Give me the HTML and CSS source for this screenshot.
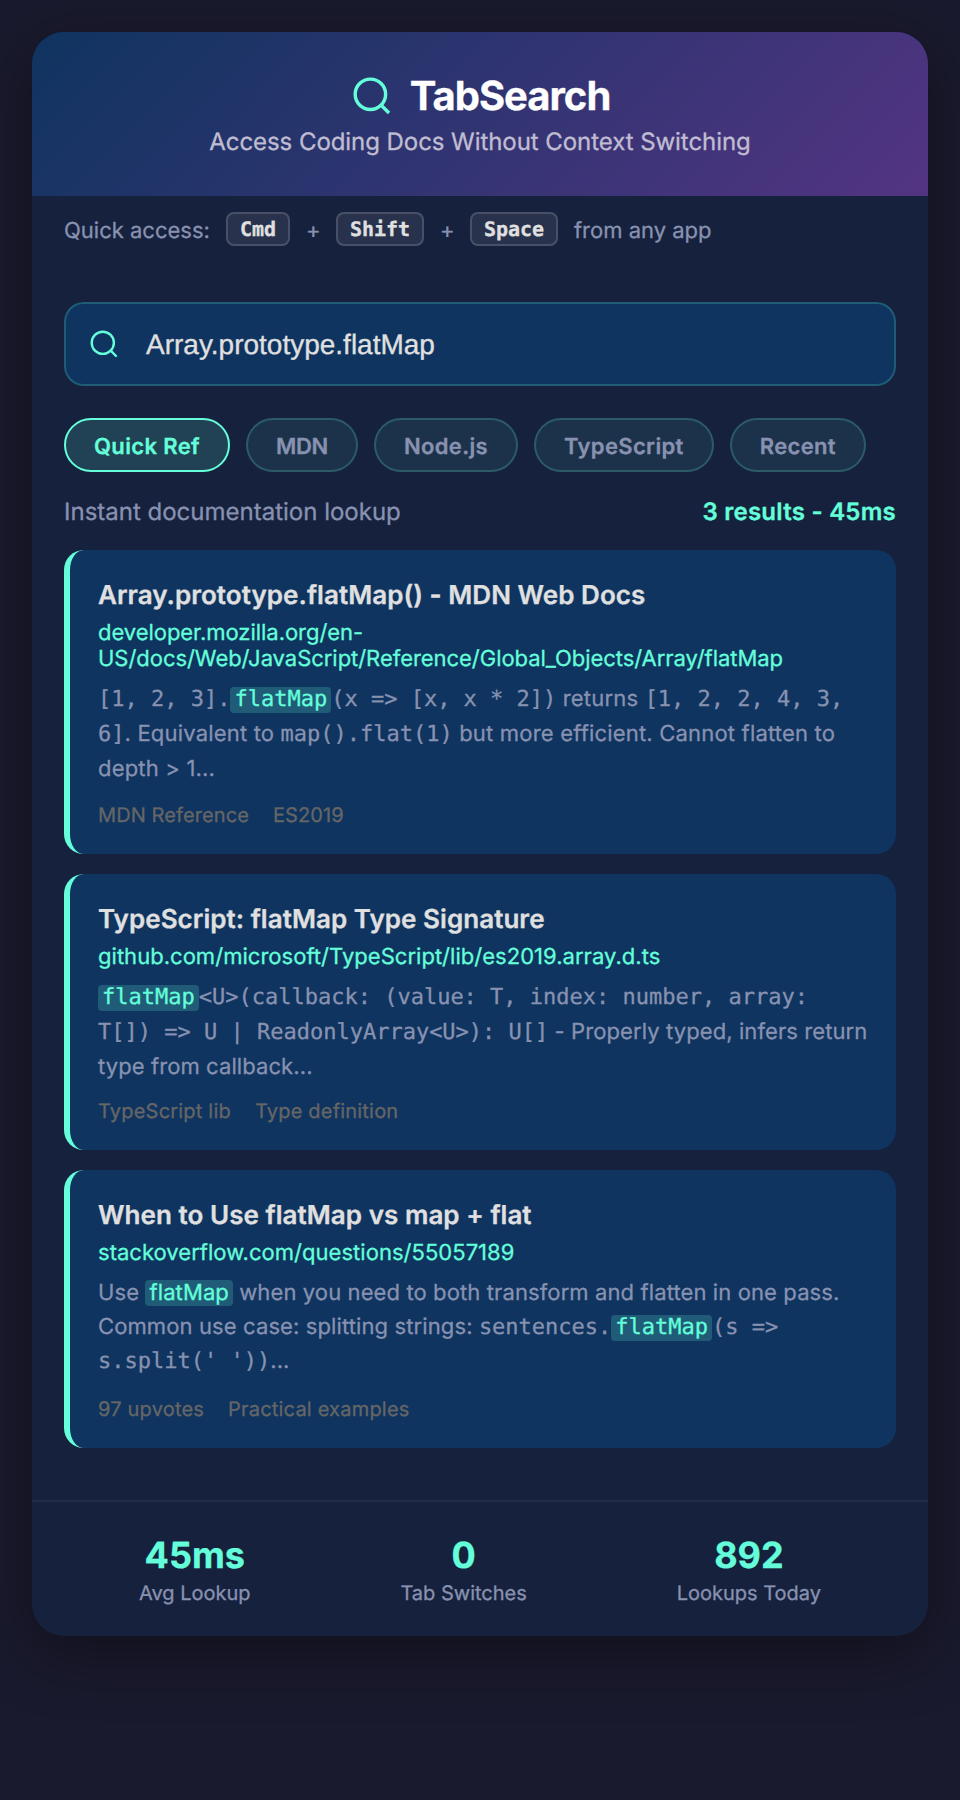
FILE: index.html
```html
<!DOCTYPE html>
<html lang="en">
<head>
<meta charset="utf-8">
<title>TabSearch</title>
<link rel="stylesheet" href="styles.css">
</head>
<body>
<main class="panel">
  <header class="header">
    <h1 class="brand">
      <svg class="brand-icon" viewBox="0 0 40 40"><circle cx="18.4" cy="18.3" r="15.2"/><path d="M29 29L37 37"/></svg>
      <span>TabSearch</span>
    </h1>
    <p class="tagline">Access Coding Docs Without Context Switching</p>
  </header>
  <div class="shortcut">
    <span>Quick access:</span>
    <kbd class="key">Cmd</kbd>
    <span class="plus">+</span>
    <kbd class="key">Shift</kbd>
    <span class="plus">+</span>
    <kbd class="key">Space</kbd>
    <span>from any app</span>
  </div>
  <section class="content">
    <div class="search">
      <svg class="search-icon" viewBox="0 0 28 28"><circle cx="12.8" cy="12.8" r="11.1"/><path d="M20.7 20.7L26 26"/></svg>
      <span class="search-text">Array.prototype.flatMap</span>
    </div>
    <nav class="tabs">
      <span class="tab tab-active">Quick Ref</span>
      <span class="tab tab-caps">MDN</span>
      <span class="tab">Node.js</span>
      <span class="tab">TypeScript</span>
      <span class="tab">Recent</span>
    </nav>
    <div class="info"><span>Instant documentation lookup</span><span class="count">3 results - 45ms</span></div>
    <div class="results">
      <article class="card card-tall">
        <h2 class="card-title">Array.prototype.flatMap() - MDN Web Docs</h2>
        <div class="card-url">developer.mozilla.org/en-US/docs/Web/JavaScript/Reference/Global_Objects/Array/flatMap</div>
        <p class="snippet"><code>[1, 2, 3].<mark>flatMap</mark>(x =&gt; [x, x * 2])</code> returns <code>[1, 2, 2, 4, 3, 6]</code>. Equivalent to <code>map().flat(1)</code> but more efficient. Cannot flatten to depth &gt; 1...</p>
        <div class="meta"><span>MDN Reference</span><span>ES2019</span></div>
      </article>
      <article class="card card-types">
        <h2 class="card-title">TypeScript: flatMap Type Signature</h2>
        <div class="card-url">github.com/microsoft/TypeScript/lib/es2019.array.d.ts</div>
        <p class="snippet"><code><mark>flatMap</mark>&lt;U&gt;(callback: (value: T, index: number, array: T[]) =&gt; U | ReadonlyArray&lt;U&gt;): U[]</code> - Properly typed, infers return type from callback...</p>
        <div class="meta"><span>TypeScript lib</span><span>Type definition</span></div>
      </article>
      <article class="card card-prose">
        <h2 class="card-title">When to Use flatMap vs map + flat</h2>
        <div class="card-url">stackoverflow.com/questions/55057189</div>
        <p class="snippet">Use <mark>flatMap</mark> when you need to both transform and flatten in one pass. Common use case: splitting strings: <code>sentences.<mark>flatMap</mark>(s =&gt; s.split(' '))</code>...</p>
        <div class="meta"><span>97 upvotes</span><span>Practical examples</span></div>
      </article>
    </div>
  </section>
  <footer class="stats">
    <div class="stat"><div class="stat-value">45ms</div><div class="stat-label">Avg Lookup</div></div>
    <div class="stat"><div class="stat-value">0</div><div class="stat-label">Tab Switches</div></div>
    <div class="stat"><div class="stat-value">892</div><div class="stat-label">Lookups Today</div></div>
  </footer>
</main>
</body>
</html>
```
FILE: styles.css
```css
* { box-sizing: border-box; margin: 0; padding: 0; }
body {
  min-height: 1800px;
  padding: 32px;
  background: #1a1a2e;
  color: #e0e0e0;
  font-family: Inter, "Liberation Sans", sans-serif;
  text-rendering: geometricPrecision;
  -webkit-text-stroke: 0.3px currentColor;
}
.panel {
  width: 896px;
  height: 1604px;
  overflow: hidden;
  border-radius: 32px;
  background: #16213e;
  box-shadow: 0 16px 64px rgba(0, 0, 0, 0.4);
}
.header {
  height: 164px;
  padding-top: 40px;
  background: linear-gradient(135deg, #0f3460 0%, #533483 100%);
  text-align: center;
}
.brand {
  display: flex;
  align-items: center;
  justify-content: center;
  gap: 18px;
  padding-left: 2px;
  color: #fff;
  font-size: 40px;
  font-weight: 700;
  line-height: 48px;
  letter-spacing: -1px;
}
.brand-icon, .search-icon { flex: none; fill: none; stroke: #64ffda; }
.brand-icon { width: 40px; height: 40px; stroke-width: 3.4; }
.search-icon { width: 28px; height: 28px; stroke-width: 2.4; stroke-linecap: round; }
.tagline {
  margin-top: 7px;
  color: #c0bdd2;
  font-size: 24px;
  line-height: 29px;
  letter-spacing: -0.06px;
}
.shortcut {
  display: flex;
  align-items: center;
  gap: 16px;
  height: 68px;
  padding: 0 32px;
  color: #8892b0;
  font-size: 22px;
  line-height: 28px;
}
.shortcut > span { padding-top: 1px; }
.shortcut .plus { width: 14px; }
.key {
  height: 34px;
  margin-bottom: 2px;
  padding: 0 12px;
  border: 2px solid rgba(255, 255, 255, 0.15);
  border-radius: 8px;
  background: rgba(255, 255, 255, 0.08);
  color: #e0e0e0;
  font: 700 20px/30px "DejaVu Sans Mono", monospace;
  letter-spacing: -0.04px;
}
.content { padding: 38px 32px 52px; }
.search {
  display: flex;
  align-items: center;
  gap: 28px;
  height: 84px;
  padding: 0 24px;
  border: 2px solid rgba(100, 255, 218, 0.2);
  border-radius: 20px;
  background: #0f3460;
}
.search-text { padding-top: 1px; font: 28px/32px "Liberation Sans", sans-serif; }
.tabs { display: flex; gap: 16px; margin-top: 32px; }
.tab {
  height: 54px;
  padding: 1px 28px 0;
  border: 2px solid rgba(100, 255, 218, 0.2);
  border-radius: 27px;
  background: rgba(100, 255, 218, 0.08);
  color: #8892b0;
  font-size: 22px;
  font-weight: 600;
  line-height: 53px;
  letter-spacing: 0.35px;
}
.tab-caps { letter-spacing: -0.3px; }
.tab-active {
  border-color: #64ffda;
  background: rgba(100, 255, 218, 0.15);
  color: #64ffda;
}
.info {
  display: flex;
  justify-content: space-between;
  margin: 25px 0 24px;
  color: #8892b0;
  font-size: 24px;
  line-height: 29px;
}
.count { color: #64ffda; font-weight: 600; letter-spacing: 0.25px; }
.results { display: flex; flex-direction: column; gap: 20px; }
.card {
  display: flex;
  flex-direction: column;
  height: 276px;
  padding: 30px 28px 27px;
  border-left: 6px solid #64ffda;
  border-radius: 20px;
  background: #0f3460;
}
.card-tall { height: 304px; }
.card-prose { height: 278px; }
.card-title {
  font-size: 26px;
  font-weight: 600;
  line-height: 32px;
  letter-spacing: 0.05px;
}
.card-url {
  margin-top: 8px;
  color: #64ffda;
  font-size: 22px;
  line-height: 26px;
  letter-spacing: 0.03px;
}
.card-tall .card-url { letter-spacing: -0.04px; }
.snippet {
  margin-top: 10px;
  color: #8892b0;
  font-size: 22px;
  line-height: 35px;
  letter-spacing: 0.09px;
}
.card-tall .snippet { letter-spacing: 0.19px; }
.card-prose .snippet { line-height: 34px; letter-spacing: 0.11px; }
.snippet code {
  font-family: "DejaVu Sans Mono", monospace;
  line-height: 1;
  letter-spacing: 0;
}
.snippet mark {
  padding: 0 4px;
  border-radius: 4px;
  background: rgba(100, 255, 218, 0.2);
  color: #64ffda;
}
.snippet code mark { padding-bottom: 1px; }
.meta {
  display: flex;
  gap: 24px;
  margin-top: auto;
  color: #666;
  font-size: 20px;
  line-height: 24px;
  letter-spacing: 0.2px;
}
.card-tall .meta { letter-spacing: 0.1px; }
.stats {
  display: flex;
  justify-content: space-around;
  height: 136px;
  padding: 31px 32px 0;
  border-top: 2px solid rgba(255, 255, 255, 0.05);
  text-align: center;
}
.stat-value { color: #64ffda; font-size: 36px; font-weight: 700; line-height: 44px; }
.stat-label { margin-top: 4px; color: #8892b0; font-size: 20px; line-height: 24px; }
```
